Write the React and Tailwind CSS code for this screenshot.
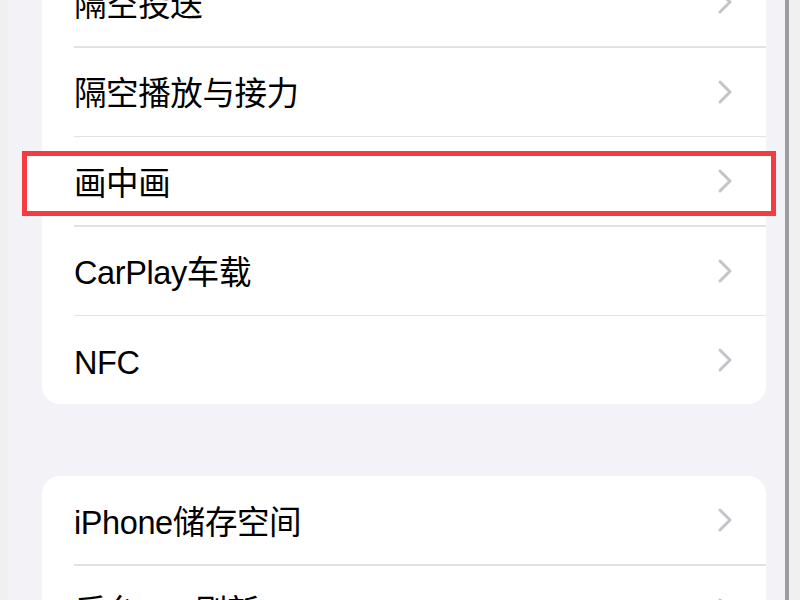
import React from "react";

const Chevron = () => (
  <svg width="16" height="26" viewBox="0 0 16 26" fill="none" className="shrink-0">
    <path d="M3 3 L13 13 L3 23" stroke="#c4c4c8" strokeWidth="3" strokeLinecap="round" strokeLinejoin="round" />
  </svg>
);

const Row = ({ label }) => (
  <div className="relative z-20 h-[88px] shrink-0 flex items-center justify-between pl-[32px] pr-[33px]">
    <span className="pt-[6px] text-[32.5px] text-black leading-none tracking-[-0.4px]">{label}</span>
    <Chevron />
  </div>
);

const Sep = () => <div className="ml-[32px] h-[1.5px] shrink-0 bg-[#e2e2e6]" />;

const Card = ({ items }) => (
  <div className="shrink-0 bg-white rounded-[18px] overflow-hidden flex flex-col">
    {items.map((it, i) => (
      <React.Fragment key={it}>
        {i > 0 && <Sep />}
        <Row label={it} />
      </React.Fragment>
    ))}
  </div>
);

export default function App() {
  return (
    <div
      className="relative w-[800px] h-[600px] overflow-hidden bg-[#f2f2f7] flex"
      style={{ fontFamily: '"Liberation Sans", "Noto Sans CJK SC", sans-serif' }}
    >
      <div className="w-[8px] h-full shrink-0 bg-[#f0f0f1]" />
      <div className="flex-1 pl-[34px] pr-[19px] -mt-[42px] flex flex-col gap-[72px]">
        <Card items={["隔空投送", "隔空播放与接力", "画中画", "CarPlay车载", "NFC"]} />
        <Card items={["iPhone储存空间", "后台App刷新"]} />
      </div>
      <div className="w-[4px] h-full shrink-0 bg-[#9d9d9f]" />
      <div className="w-[11px] h-full shrink-0 bg-[#f0f0f1]" />
      <div className="absolute z-10 left-[22px] top-[151px] w-[754px] h-[65px] border-[5px] border-[#f53b3f] bg-white" />
    </div>
  );
}
